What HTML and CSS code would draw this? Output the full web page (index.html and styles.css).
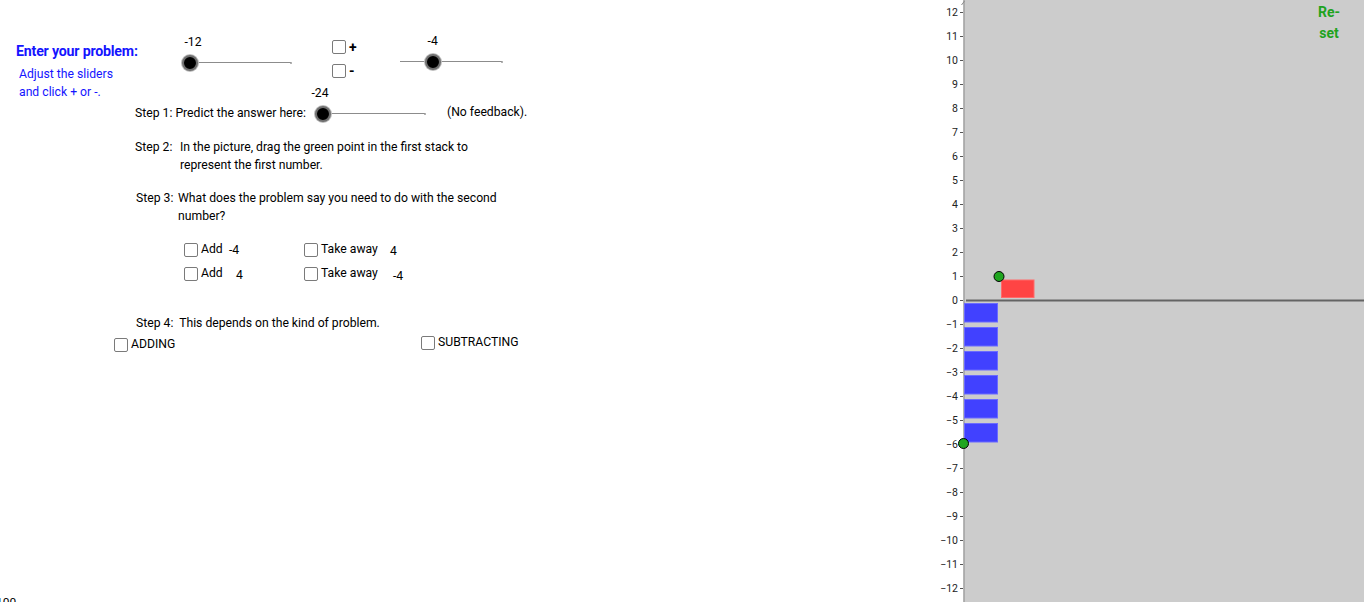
FILE: index.html
```html
<!DOCTYPE html>
<html lang="en">
<head>
<meta charset="utf-8">
<title>Integer stacks</title>
<link rel="stylesheet" href="styles.css">
</head>
<body>
<div class="app">
  <div class="sheet">
    <div class="top">
      <div class="intro">
        <div class="title">Enter your problem:</div>
        <div class="hint">Adjust the sliders<br>and click + or -.</div>
      </div>
      <div class="slider s1">
        <div class="rail">
          <span class="val" style="left:0%">-12</span>
          <span class="knob" style="left:0%"></span>
        </div>
      </div>
      <div class="signs">
        <div class="chk"><span class="box"></span><b>+</b></div>
        <div class="chk"><span class="box"></span><b>-</b></div>
      </div>
      <div class="slider s2">
        <div class="rail">
          <span class="val" style="left:32%">-4</span>
          <span class="knob" style="left:32%"></span>
        </div>
      </div>
    </div>

    <div class="step1">
      <span class="s1text">Step 1: Predict the answer here:</span>
      <div class="slider s3">
        <div class="rail">
          <span class="val" style="left:0%">-24</span>
          <span class="knob" style="left:0%"></span>
        </div>
      </div>
      <span class="nofb">(No feedback).</span>
    </div>

    <div class="step step2">
      <span class="lbl">Step 2:</span>
      <span class="txt">In the picture, drag the green point in the first stack to<br>represent the first number.</span>
    </div>

    <div class="step step3">
      <span class="lbl">Step 3:</span>
      <span class="txt">What does the problem say you need to do with the second<br>number?</span>
    </div>

    <div class="opts">
      <div class="optrow">
        <div class="opt add"><span class="box"></span><span class="name">Add</span><span class="num n1">-4</span></div>
        <div class="opt take"><span class="box"></span><span class="name">Take away</span><span class="num n2">4</span></div>
      </div>
      <div class="optrow">
        <div class="opt add"><span class="box"></span><span class="name">Add</span><span class="num n3">4</span></div>
        <div class="opt take"><span class="box"></span><span class="name">Take away</span><span class="num n4">-4</span></div>
      </div>
    </div>

    <div class="step4">Step 4:&nbsp; This depends on the kind of problem.</div>

    <div class="kinds">
      <div class="kind adding"><span class="box"></span><span>ADDING</span></div>
      <div class="kind subtracting"><span class="box"></span><span>SUBTRACTING</span></div>
    </div>

    <div class="corner">100</div>
  </div>

  <svg class="graph" viewBox="930 0 436 602" width="436" height="602" xmlns="http://www.w3.org/2000/svg">
    <rect x="964" y="0" width="400" height="602" fill="#cccccc"/>
    <line x1="964" y1="0" x2="964" y2="602" stroke="#a3a3a3" stroke-width="1.6"/>
    <line x1="961.5" y1="5" x2="964.5" y2="1" stroke="#8a8a8a" stroke-width="1"/>
    <line x1="966" y1="300.5" x2="1364" y2="300.5" stroke="#646464" stroke-width="2"/>
    <g class="ticks" stroke="#555" stroke-width="1">
      <line x1="960" y1="12.5" x2="963" y2="12.5"/>
      <line x1="960" y1="36.5" x2="963" y2="36.5"/>
      <line x1="960" y1="60.5" x2="963" y2="60.5"/>
      <line x1="960" y1="84.5" x2="963" y2="84.5"/>
      <line x1="960" y1="108.5" x2="963" y2="108.5"/>
      <line x1="960" y1="132.5" x2="963" y2="132.5"/>
      <line x1="960" y1="156.5" x2="963" y2="156.5"/>
      <line x1="960" y1="180.5" x2="963" y2="180.5"/>
      <line x1="960" y1="204.5" x2="963" y2="204.5"/>
      <line x1="960" y1="228.5" x2="963" y2="228.5"/>
      <line x1="960" y1="252.5" x2="963" y2="252.5"/>
      <line x1="960" y1="276.5" x2="963" y2="276.5"/>
      <line x1="960" y1="300.5" x2="963" y2="300.5"/>
      <line x1="960" y1="324.5" x2="963" y2="324.5"/>
      <line x1="960" y1="348.5" x2="963" y2="348.5"/>
      <line x1="960" y1="372.5" x2="963" y2="372.5"/>
      <line x1="960" y1="396.5" x2="963" y2="396.5"/>
      <line x1="960" y1="420.5" x2="963" y2="420.5"/>
      <line x1="960" y1="444.5" x2="963" y2="444.5"/>
      <line x1="960" y1="468.5" x2="963" y2="468.5"/>
      <line x1="960" y1="492.5" x2="963" y2="492.5"/>
      <line x1="960" y1="516.5" x2="963" y2="516.5"/>
      <line x1="960" y1="540.5" x2="963" y2="540.5"/>
      <line x1="960" y1="564.5" x2="963" y2="564.5"/>
      <line x1="960" y1="588.5" x2="963" y2="588.5"/>
    </g>
    <g class="labels" text-anchor="end">
      <text x="958" y="16">12</text>
      <text x="958" y="40">11</text>
      <text x="958" y="64">10</text>
      <text x="958" y="88">9</text>
      <text x="958" y="112">8</text>
      <text x="958" y="136">7</text>
      <text x="958" y="160">6</text>
      <text x="958" y="184">5</text>
      <text x="958" y="208">4</text>
      <text x="958" y="232">3</text>
      <text x="958" y="256">2</text>
      <text x="958" y="280">1</text>
      <text x="958" y="304">0</text>
      <text x="958" y="328">−1</text>
      <text x="958" y="352">−2</text>
      <text x="958" y="376">−3</text>
      <text x="958" y="400">−4</text>
      <text x="958" y="424">−5</text>
      <text x="958" y="448">−6</text>
      <text x="958" y="472">−7</text>
      <text x="958" y="496">−8</text>
      <text x="958" y="520">−9</text>
      <text x="958" y="544">−10</text>
      <text x="958" y="568">−11</text>
      <text x="958" y="592">−12</text>
    </g>
    <g fill="#4141ff" stroke="#6b6bff" stroke-width="1">
      <rect x="964.5" y="303.5" width="33" height="18.5"/>
      <rect x="964.5" y="327.5" width="33" height="18.5"/>
      <rect x="964.5" y="351.5" width="33" height="18.5"/>
      <rect x="964.5" y="375.5" width="33" height="18.5"/>
      <rect x="964.5" y="399.5" width="33" height="18.5"/>
      <rect x="964.5" y="423.5" width="33" height="18.5"/>
    </g>
    <rect x="1001.5" y="280" width="32.5" height="17.5" fill="#ff4444" stroke="#ff6a6a" stroke-width="1"/>
    <circle cx="999" cy="276.5" r="5" fill="#1fa51f" stroke="#000" stroke-width="1"/>
    <circle cx="963.5" cy="443.5" r="5" fill="#1fa51f" stroke="#000" stroke-width="1"/>
    <text class="reset" x="1329" y="17" text-anchor="middle">Re-</text>
    <text class="reset" x="1329" y="38" text-anchor="middle">set</text>
  </svg>
</div>
</body>
</html>
```

FILE: styles.css
```css
html, body {
  margin: 0;
  padding: 0;
  background: #ffffff;
  overflow: hidden;
}

.app {
  display: flex;
  width: 1366px;
  height: 602px;
}

.sheet {
  width: 930px;
  height: 602px;
  flex: none;
  display: flex;
  flex-direction: column;
  font-family: Roboto, "Liberation Sans", sans-serif;
  font-size: 12.2px;
  color: #000;
  line-height: 18px;
}

.graph {
  flex: none;
  display: block;
}

/* top row */
.top {
  display: flex;
  align-items: flex-start;
  height: 86px;
  padding-top: 35px;
  box-sizing: border-box;
  flex: none;
}

.intro {
  width: 166px;
  margin-left: 16px;
  padding-top: 7px;
  flex: none;
}

.title {
  color: #1414ff;
  font-weight: bold;
  font-size: 14.2px;
  line-height: 18px;
  letter-spacing: -0.2px;
}

.hint {
  color: #1414ff;
  margin-left: 3px;
  margin-top: 5px;
  line-height: 18px;
}

/* sliders */
.slider {
  flex: none;
  height: 36px;
  padding: 0 8px;
  box-sizing: border-box;
}

.s1 { width: 117px; margin-top: 0; }
.s2 { width: 118px; margin-top: -1px; }
.s3 { width: 118px; }

.rail {
  position: relative;
  height: 100%;
}

.rail::before {
  content: "";
  position: absolute;
  left: 0;
  right: 0;
  top: 27px;
  height: 1px;
  background: #8c8c8c;
}

.rail::after {
  content: "";
  position: absolute;
  right: -1px;
  top: 26.5px;
  width: 2px;
  height: 2px;
  border-radius: 50%;
  background: #9a9a9a;
}

.knob {
  position: absolute;
  top: 19.5px;
  width: 16px;
  height: 16px;
  margin-left: -8px;
  box-sizing: border-box;
  border-radius: 50%;
  background: #000;
  border: 2px solid #6f6f6f;
  box-shadow: 0 0 0 1px #bdbdbd;
  z-index: 1;
}

.val {
  position: absolute;
  top: 0;
  line-height: 14px;
  white-space: nowrap;
  transform: translateX(-50%);
}

.s1 .val { margin-left: 3px; }
.s3 .val { margin-left: -3px; }

/* sign checkboxes */
.signs {
  width: 60px;
  margin-left: 33px;
  margin-top: 5px;
  flex: none;
}

.chk {
  display: flex;
  height: 24px;
  align-items: flex-start;
}

.chk b {
  margin-left: 3px;
  line-height: 14px;
  font-size: 14px;
}

.box {
  display: block;
  flex: none;
  width: 14px;
  height: 14px;
  box-sizing: border-box;
  border: 1px solid #7a7a7a;
  border-radius: 2px;
  background: #fff;
}

/* step 1 */
.step1 {
  display: flex;
  align-items: flex-end;
  height: 36px;
  margin-left: 135px;
  flex: none;
}

.s1text {
  width: 180px;
  flex: none;
  white-space: nowrap;
}

.nofb {
  margin-left: 14px;
  margin-bottom: 1px;
  white-space: nowrap;
}

/* steps */
.step {
  display: flex;
  flex: none;
  white-space: nowrap;
}

.step .lbl { flex: none; }

.step2 {
  margin-top: 16px;
  margin-left: 135px;
}
.step2 .lbl { width: 45px; }

.step3 {
  margin-top: 15px;
  margin-left: 136px;
}
.step3 .lbl { width: 42px; }

/* options */
.opts {
  margin-top: 15px;
  margin-left: 184px;
  flex: none;
}

.optrow {
  display: flex;
  height: 24px;
}

.opt {
  display: flex;
  align-items: flex-start;
  white-space: nowrap;
}

.opt .box { margin-top: 3px; }

.opt .name { margin-left: 3px; }

.add { width: 120px; }
.add .name { width: 28px; }
.take .name { width: 69px; }

.num { flex: none; }
.n1 { padding-top: 1px; }
.n2 { padding-top: 2px; }
.n3 { padding-top: 2px; margin-left: 7px; }
.n4 { padding-top: 3px; margin-left: 3px; }

/* step 4 */
.step4 {
  margin-top: 26px;
  margin-left: 136px;
  flex: none;
  white-space: nowrap;
}

.kinds {
  display: flex;
  align-items: flex-start;
  margin-left: 114px;
  margin-top: 1px;
  flex: none;
}

.kind {
  display: flex;
  align-items: flex-start;
  white-space: nowrap;
}

.kind .box {
  margin-top: 3px;
  margin-right: 3px;
}

.adding {
  width: 307px;
  margin-top: 2px;
}

.corner {
  margin-top: auto;
  height: 7px;
  overflow: hidden;
  line-height: 16px;
  font-size: 12px;
  margin-left: -4px;
  flex: none;
}

/* graph text */
.labels text {
  font-family: Roboto, "Liberation Sans", sans-serif;
  font-size: 10.5px;
  fill: #222;
}

.reset {
  font-family: Roboto, "Liberation Sans", sans-serif;
  font-size: 14px;
  font-weight: bold;
  fill: #1ea31e;
}
```
